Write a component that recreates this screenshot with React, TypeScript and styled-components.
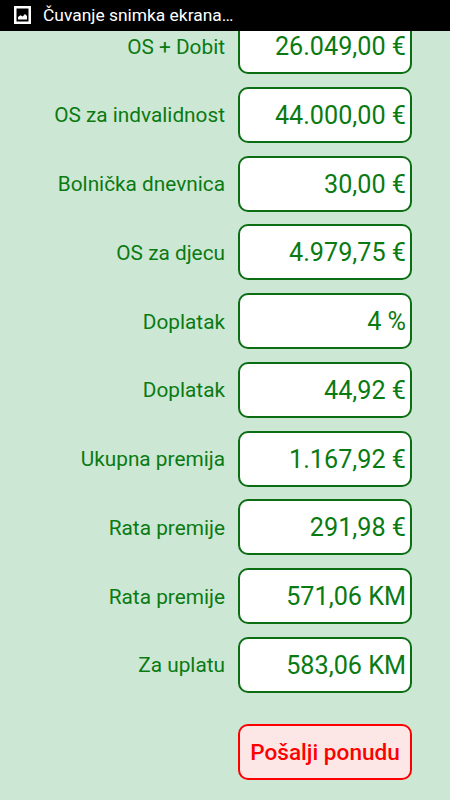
import React from "react";
import styled, { createGlobalStyle } from "styled-components";

const Global = createGlobalStyle`
  html, body { margin: 0; padding: 0; background: #cde7d5; }
  * { box-sizing: border-box; }
`;

const Screen = styled.div`
  width: 450px;
  height: 800px;
  display: flex;
  flex-direction: column;
  overflow: hidden;
  background: #cde7d5;
  font-family: Roboto, "Noto Sans", sans-serif;
`;

const StatusBar = styled.div`
  flex: 0 0 31px;
  display: flex;
  align-items: center;
  gap: 12px;
  padding: 0 0 1px 14px;
  background: #000;
  color: #fff;
  font-size: 17.4px;
`;

const Content = styled.div`
  flex: 1;
  min-height: 0;
  display: flex;
  flex-direction: column;
  justify-content: flex-end;
  overflow: hidden;
  padding-bottom: 20px;
`;

const Row = styled.div`
  flex: none;
  display: flex;
  justify-content: flex-end;
  align-items: center;
  gap: 13px;
  height: 56px;
  margin-bottom: 12.75px;
  padding-right: 38px;
`;

const Label = styled.span`
  color: #0a7a12;
  font-size: 20.8px;
  padding-top: 1px;
`;

const ValueBox = styled.div`
  width: 174px;
  height: 56px;
  display: flex;
  align-items: center;
  justify-content: flex-end;
  padding: 1px 4px 0 0;
  background: #fff;
  border: 2px solid #0b6e12;
  border-radius: 10px;
  color: #0a7a12;
  font-size: 25.2px;
`;

const SendRow = styled.div`
  flex: none;
  display: flex;
  justify-content: flex-end;
  padding-right: 38px;
  margin-top: 18.5px;
`;

const SendButton = styled.button`
  width: 174px;
  height: 56px;
  padding: 0;
  background: #fde7e6;
  border: 2px solid #f00;
  border-radius: 10px;
  color: #f00;
  font-family: inherit;
  font-size: 22.6px;
  font-weight: 500;
`;

const rows: [string, string][] = [
  ["OS + Dobit", "26.049,00 €"],
  ["OS za indvalidnost", "44.000,00 €"],
  ["Bolnička dnevnica", "30,00 €"],
  ["OS za djecu", "4.979,75 €"],
  ["Doplatak", "4 %"],
  ["Doplatak", "44,92 €"],
  ["Ukupna premija", "1.167,92 €"],
  ["Rata premije", "291,98 €"],
  ["Rata premije", "571,06 KM"],
  ["Za uplatu", "583,06 KM"],
];

const ImageIcon = () => (
  <svg width="17" height="18" viewBox="0 0 17 18" aria-hidden="true">
    <path fill="#fff" fillRule="evenodd" d="M0 0h17v18H0zM2.5 2.5v13h12v-13z" />
    <path fill="#fff" d="M4 13.5V11l2.5-1.8 2.2 1.2L11 8l2 2v3.5z" />
  </svg>
);

export default function App() {
  return (
    <Screen>
      <Global />
      <StatusBar>
        <ImageIcon />
        <span>Čuvanje snimka ekrana…</span>
      </StatusBar>
      <Content>
        {rows.map(([label, value], i) => (
          <Row key={i}>
            <Label>{label}</Label>
            <ValueBox>{value}</ValueBox>
          </Row>
        ))}
        <SendRow>
          <SendButton>Pošalji ponudu</SendButton>
        </SendRow>
      </Content>
    </Screen>
  );
}
